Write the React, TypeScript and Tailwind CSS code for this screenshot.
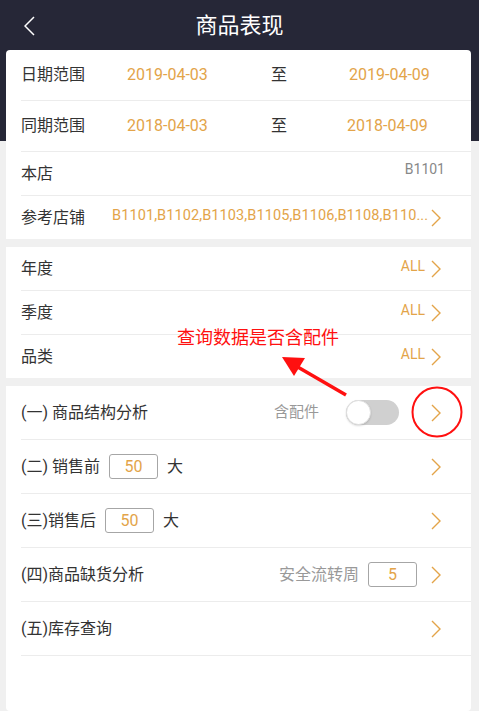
import React from "react";

const font = { fontFamily: 'Roboto, "Noto Sans CJK SC", sans-serif' };

function Chevron() {
  return (
    <svg width="10" height="18" viewBox="0 0 10 18" className="shrink-0">
      <polyline points="1,1 9,9 1,17" fill="none" stroke="#e3a449" strokeWidth="1.4" />
    </svg>
  );
}

function Box({ v }: { v: string }) {
  return (
    <div className="w-[49px] h-[25px] border border-[#a6a6a6] rounded-[3px] flex items-center justify-center text-[16px] text-[#e3a449]">
      {v}
    </div>
  );
}

export default function App() {
  return (
    <div className="w-[479px] h-[711px] bg-[#f0f0f0] overflow-hidden relative" style={font}>
      <div className="h-[141px] bg-[#262737]">
        <div className="h-[50px] flex items-center justify-center relative">
          <svg width="11" height="20" viewBox="0 0 11 20" className="absolute left-[24px] top-[16px]">
            <polyline points="10,1 1,10 10,19" fill="none" stroke="#ffffff" strokeWidth="1.5" />
          </svg>
          <span className="text-white text-[22px] leading-none mt-[1px]">商品表现</span>
        </div>
      </div>
      <div className="-mt-[91px] ml-[6px] w-[465px] flex flex-col gap-[8px] text-[16px] text-[#333]">
        {/* section 1 */}
        <div className="bg-white rounded-t-[4px] pl-[15px]">
          <div className="h-[51px] border-b border-[#ececec] flex items-center">
            <span className="w-[106px]">日期范围</span>
            <span className="w-[144px] text-[#e3a449]">2019-04-03</span>
            <span className="w-[78px]">至</span>
            <span className="text-[#e3a449]">2019-04-09</span>
          </div>
          <div className="h-[51px] border-b border-[#ececec] flex items-center">
            <span className="w-[106px]">同期范围</span>
            <span className="w-[144px] text-[#e3a449]">2018-04-03</span>
            <span className="w-[76px]">至</span>
            <span className="text-[#e3a449]">2018-04-09</span>
          </div>
          <div className="h-[44px] border-b border-[#ececec] flex items-center pr-[26px]">
            <span className="flex-1">本店</span>
            <span className="text-[14px] text-[#888] -mt-[8px]">B1101</span>
          </div>
          <div className="h-[43px] flex items-center pr-[30px]">
            <span className="w-[91px] shrink-0">参考店铺</span>
            <span className="flex-1 min-w-0 whitespace-nowrap text-[14.5px] tracking-[0.1px] text-[#e3a449] mr-[6px] -mt-[3px]">
              B1101,B1102,B1103,B1105,B1106,B1108,B110...
            </span>
            <Chevron />
          </div>
        </div>
        {/* section 2 */}
        <div className="bg-white pl-[15px]">
          {["年度", "季度", "品类"].map((l, i) => (
            <div
              key={l}
              className={`${i < 2 ? "h-[44px] border-b border-[#ececec]" : "h-[43px]"} flex items-center pr-[30px]`}
            >
              <span className="flex-1">{l}</span>
              <span className="text-[14px] text-[#e3a449] mr-[6px] -mt-[4px]">ALL</span>
              <Chevron />
            </div>
          ))}
        </div>
        {/* section 3 */}
        <div className="bg-white rounded-b-[4px] pl-[15px] h-[325px]">
          <div className="h-[54px] border-b border-[#ececec] flex items-center pr-[30px]">
            <span className="flex-1">(一) 商品结构分析</span>
            <span className="text-[15px] text-[#999] mr-[27px]">含配件</span>
            <div className="w-[53px] h-[25px] rounded-full bg-[#d0d0d0] relative mr-[32px]">
              <div className="absolute left-0 top-0 w-[25px] h-[25px] rounded-full bg-white border border-[#e0e0e0] shadow-[0_1px_2px_rgba(0,0,0,0.15)]" />
            </div>
            <Chevron />
          </div>
          <div className="h-[54px] border-b border-[#ececec] flex items-center pr-[30px]">
            <span className="mr-[9px]">(二) 销售前</span>
            <Box v="50" />
            <span className="ml-[9px] flex-1">大</span>
            <Chevron />
          </div>
          <div className="h-[54px] border-b border-[#ececec] flex items-center pr-[30px]">
            <span className="mr-[9px]">(三)销售后</span>
            <Box v="50" />
            <span className="ml-[9px] flex-1">大</span>
            <Chevron />
          </div>
          <div className="h-[54px] border-b border-[#ececec] flex items-center pr-[30px]">
            <span className="flex-1">(四)商品缺货分析</span>
            <span className="text-[16px] text-[#999] mr-[9px]">安全流转周</span>
            <Box v="5" />
            <span className="w-[14px]" />
            <Chevron />
          </div>
          <div className="h-[54px] border-b border-[#ececec] flex items-center pr-[30px]">
            <span className="flex-1">(五)库存查询</span>
            <Chevron />
          </div>
        </div>
      </div>

      {/* annotation */}
      <div className="absolute left-[177px] top-[326px] text-[18px] leading-[24px] text-[#ff1010] whitespace-nowrap">
        查询数据是否含配件
      </div>
      <svg className="absolute left-0 top-0 pointer-events-none" width="479" height="711">
        <line x1="346" y1="395" x2="296" y2="366" stroke="#ff1010" strokeWidth="3.5" />
        <polygon points="282,357 305,358 294,376" fill="#ff1010" />
        <circle cx="437" cy="412" r="24.5" fill="none" stroke="#ff1010" strokeWidth="2" />
      </svg>
    </div>
  );
}
